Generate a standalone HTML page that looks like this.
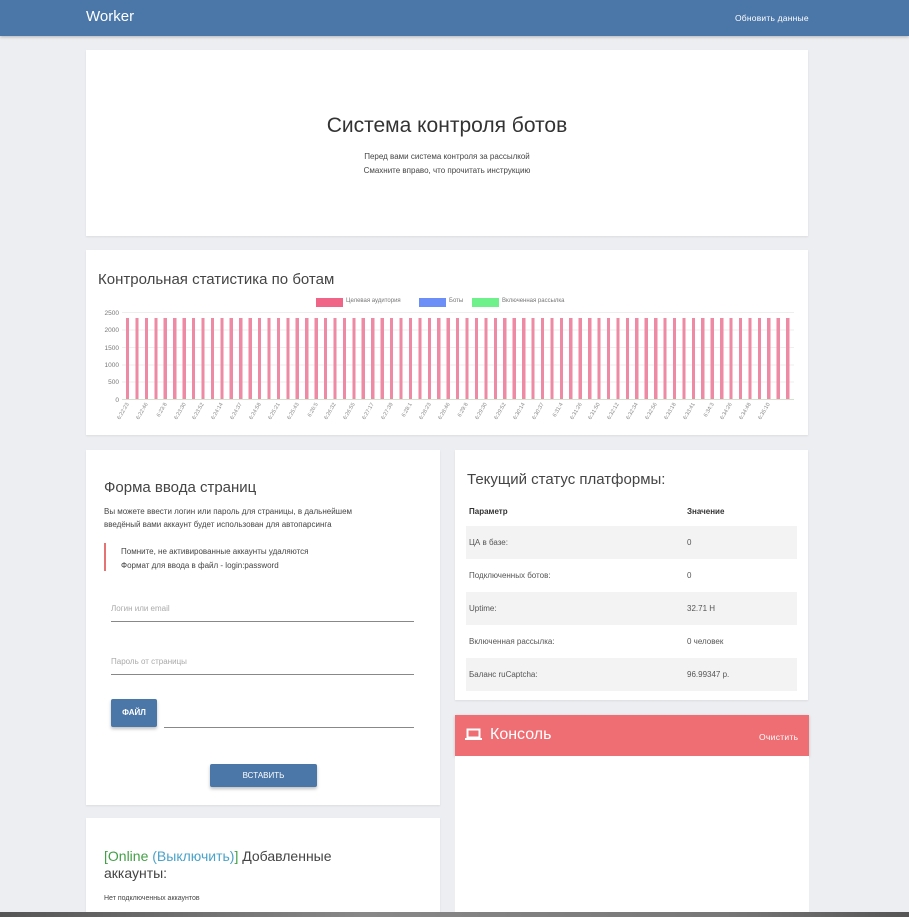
<!DOCTYPE html>
<html><head><meta charset="utf-8"><style>
*{margin:0;padding:0;box-sizing:border-box}
body{width:909px;height:917px;overflow:hidden;background:#eceef1;font-family:"Liberation Sans","Noto Sans CJK SC",sans-serif;color:#333;position:relative}
.abs{position:absolute}
.nav{left:0;top:0;width:909px;height:36px;background:#4a76a8;box-shadow:0 1px 3px rgba(0,0,0,.25)}
.card{background:#fff;box-shadow:0 1px 2px rgba(0,0,0,.08)}
.t8{font-size:8px;color:#444}
.row{left:466px;width:331px;height:33px;font-size:8px;color:#555}
.row span{position:absolute;top:12px}
.str{background:#f3f3f3}
.line{height:1px;background:#888}
.btn{background:#4a76a8;color:#fff;font-size:8px;font-weight:bold;text-align:center;box-shadow:0 2px 3px rgba(0,0,0,.25);border-radius:2px}
</style></head><body>
<div class="abs nav"></div>
<div class="abs" style="left:86px;top:8px;color:#fff;font-size:15px">Worker</div>
<div class="abs" style="left:735px;top:13px;color:#fff;font-size:8.5px;letter-spacing:0.2px">Обновить данные</div>

<div class="abs card" style="left:86px;top:50px;width:722px;height:186px"></div>
<div class="abs" style="left:86px;top:114px;width:722px;text-align:center;font-size:21px;color:#333">Система контроля ботов</div>
<div class="abs" style="left:86px;top:150px;width:722px;text-align:center;font-size:8px;color:#444;line-height:14px">Перед вами система контроля за рассылкой<br>Смахните вправо, что прочитать инструкцию</div>

<div class="abs card" style="left:86px;top:250px;width:722px;height:185px"></div>
<div class="abs" style="left:98px;top:271px;font-size:15px;color:#444">Контрольная статистика по ботам</div>
<div class="abs" style="left:316px;top:298px;width:27px;height:9px;background:#f06587"></div>
<div class="abs" style="left:346px;top:298px;font-size:6px;color:#777">Целевая аудитория</div>
<div class="abs" style="left:419px;top:298px;width:27px;height:9px;background:#6c8ef7"></div>
<div class="abs" style="left:449px;top:298px;font-size:6px;color:#777">Боты</div>
<div class="abs" style="left:472px;top:298px;width:27px;height:9px;background:#6ef08a"></div>
<div class="abs" style="left:502px;top:298px;font-size:6px;color:#777">Включенная рассылка</div>
<svg class="abs" style="left:0;top:0" width="909" height="440">
<g stroke="#eee" stroke-width="1">
<line x1="122" y1="312.5" x2="794" y2="312.5"/><line x1="122" y1="330" x2="794" y2="330"/><line x1="122" y1="347.5" x2="794" y2="347.5"/><line x1="122" y1="365" x2="794" y2="365"/><line x1="122" y1="382" x2="794" y2="382"/>
</g>
<line x1="122" y1="399.5" x2="794" y2="399.5" stroke="#cfe3cf"/>
<g font-size="6.5" fill="#777" text-anchor="end" font-family="Liberation Sans">
<text x="119" y="315">2500</text><text x="119" y="332">2000</text><text x="119" y="350">1500</text><text x="119" y="367">1000</text><text x="119" y="384">500</text><text x="119" y="402">0</text>
</g>
</svg>
<div class="abs" style="left:125.5px;top:318px;width:666px;height:81px;background:repeating-linear-gradient(90deg,#ee8aa3 0,#ee8aa3 3.2px,transparent 3.2px,transparent 9.43px)"></div>
<svg class="abs" style="left:0;top:0" width="909" height="440">
<g font-size="5.5" fill="#888" text-anchor="end" font-family="Liberation Sans">
<text transform="translate(129,404) rotate(-60)">6:22:23</text>
<text transform="translate(148,404) rotate(-60)">6:22:46</text>
<text transform="translate(167,404) rotate(-60)">6:23:8</text>
<text transform="translate(186,404) rotate(-60)">6:23:30</text>
<text transform="translate(204,404) rotate(-60)">6:23:52</text>
<text transform="translate(223,404) rotate(-60)">6:24:14</text>
<text transform="translate(242,404) rotate(-60)">6:24:37</text>
<text transform="translate(261,404) rotate(-60)">6:24:58</text>
<text transform="translate(280,404) rotate(-60)">6:25:21</text>
<text transform="translate(299,404) rotate(-60)">6:25:43</text>
<text transform="translate(318,404) rotate(-60)">6:26:5</text>
<text transform="translate(336,404) rotate(-60)">6:26:32</text>
<text transform="translate(355,404) rotate(-60)">6:26:55</text>
<text transform="translate(374,404) rotate(-60)">6:27:17</text>
<text transform="translate(393,404) rotate(-60)">6:27:39</text>
<text transform="translate(412,404) rotate(-60)">6:28:1</text>
<text transform="translate(431,404) rotate(-60)">6:28:23</text>
<text transform="translate(450,404) rotate(-60)">6:28:46</text>
<text transform="translate(468,404) rotate(-60)">6:29:8</text>
<text transform="translate(487,404) rotate(-60)">6:29:30</text>
<text transform="translate(506,404) rotate(-60)">6:29:52</text>
<text transform="translate(525,404) rotate(-60)">6:30:14</text>
<text transform="translate(544,404) rotate(-60)">6:30:37</text>
<text transform="translate(563,404) rotate(-60)">6:31:4</text>
<text transform="translate(582,404) rotate(-60)">6:31:26</text>
<text transform="translate(600,404) rotate(-60)">6:31:50</text>
<text transform="translate(619,404) rotate(-60)">6:32:12</text>
<text transform="translate(638,404) rotate(-60)">6:32:34</text>
<text transform="translate(657,404) rotate(-60)">6:32:56</text>
<text transform="translate(676,404) rotate(-60)">6:33:18</text>
<text transform="translate(695,404) rotate(-60)">6:33:41</text>
<text transform="translate(714,404) rotate(-60)">6:34:3</text>
<text transform="translate(732,404) rotate(-60)">6:34:26</text>
<text transform="translate(751,404) rotate(-60)">6:34:48</text>
<text transform="translate(770,404) rotate(-60)">6:35:10</text>
</g>
</svg>

<div class="abs card" style="left:86px;top:450px;width:354px;height:355px"></div>
<div class="abs" style="left:104px;top:479px;font-size:15px;color:#444">Форма ввода страниц</div>
<div class="abs t8" style="left:104px;top:505px;line-height:13px">Вы можете ввести логин или пароль для страницы, в дальнейшем<br>введёный вами аккаунт будет использован для автопарсинга</div>
<div class="abs" style="left:104px;top:543px;width:2px;height:28px;background:#e57373"></div>
<div class="abs t8" style="left:121px;top:545px;line-height:14px">Помните, не активированные аккаунты удаляются<br>Формат для ввода в файл - login:password</div>
<div class="abs" style="left:111px;top:604px;font-size:8px;color:#aaa">Логин или email</div>
<div class="abs line" style="left:111px;top:621px;width:303px"></div>
<div class="abs" style="left:111px;top:657px;font-size:8px;color:#aaa">Пароль от страницы</div>
<div class="abs line" style="left:111px;top:674px;width:303px"></div>
<div class="abs btn" style="left:111px;top:699px;width:46px;height:28px;line-height:28px">ФАЙЛ</div>
<div class="abs line" style="left:164px;top:727px;width:250px"></div>
<div class="abs btn" style="left:210px;top:764px;width:107px;height:23px;line-height:23px;font-weight:normal">ВСТАВИТЬ</div>

<div class="abs card" style="left:86px;top:818px;width:354px;height:99px"></div>
<div class="abs" style="left:104px;top:848px;font-size:14px;color:#444;line-height:17px;width:300px"><span style="color:#43a047">[Online </span><span style="color:#4aa3c9">(Выключить)</span><span style="color:#43a047">]</span> Добавленные<br>аккаунты:</div>
<div class="abs" style="left:104px;top:895px;font-size:7px;color:#444">Нет подключенных аккаунтов</div>

<div class="abs card" style="left:455px;top:450px;width:353px;height:250px"></div>
<div class="abs" style="left:467px;top:471px;font-size:15px;color:#444">Текущий статус платформы:</div>
<div class="abs" style="left:469px;top:507px;font-size:8px;font-weight:bold;color:#333">Параметр</div>
<div class="abs" style="left:687px;top:507px;font-size:8px;font-weight:bold;color:#333">Значение</div>
<div class="abs row str" style="top:526px"><span style="left:3px">ЦА в базе:</span><span style="left:221px">0</span></div>
<div class="abs row" style="top:559px"><span style="left:3px">Подключенных ботов:</span><span style="left:221px">0</span></div>
<div class="abs row str" style="top:592px"><span style="left:3px">Uptime:</span><span style="left:221px">32.71 H</span></div>
<div class="abs row" style="top:625px"><span style="left:3px">Включенная рассылка:</span><span style="left:221px">0 человек</span></div>
<div class="abs row str" style="top:658px"><span style="left:3px">Баланс ruCaptcha:</span><span style="left:221px">96.99347 р.</span></div>

<div class="abs" style="left:455px;top:715px;width:354px;height:41px;background:#ee6e73;box-shadow:0 1px 3px rgba(0,0,0,.2)"></div>
<svg class="abs" style="left:465px;top:728px" width="18" height="14"><rect x="2.5" y="1.5" width="12" height="8" fill="none" stroke="#fff" stroke-width="2"/><rect x="0" y="10" width="17" height="2" fill="#fff"/></svg>
<div class="abs" style="left:490px;top:726px;font-size:16px;color:#fff">Консоль</div>
<div class="abs" style="left:759px;top:732px;font-size:8.5px;color:#fff;letter-spacing:0.3px">Очистить</div>
<div class="abs" style="left:455px;top:756px;width:354px;height:161px;background:#fff"></div>

<div class="abs" style="left:0;top:912px;width:909px;height:5px;background:linear-gradient(90deg,#555,#888 40%,#777 80%,#555)"></div>
</body></html>
